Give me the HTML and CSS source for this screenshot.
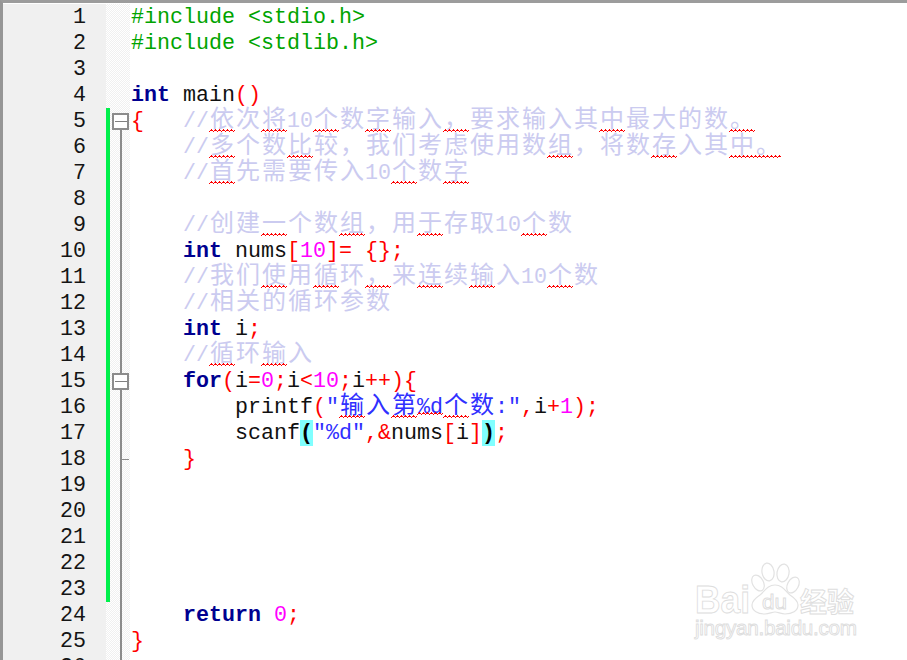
FILE: index.html
```html
<!DOCTYPE html>
<html lang="zh">
<head>
<meta charset="utf-8">
<title>Editor</title>
<link rel="stylesheet" href="styles.css">
</head>
<body>
<main class="editor">
<div class="row"><span class="num">1</span><span class="fold"></span><code class="code"><span class="pp">#include &lt;stdio.h&gt;</span></code></div>
<div class="row"><span class="num">2</span><span class="fold"></span><code class="code"><span class="pp">#include &lt;stdlib.h&gt;</span></code></div>
<div class="row"><span class="num">3</span><span class="fold"></span><code class="code"></code></div>
<div class="row"><span class="num">4</span><span class="fold"></span><code class="code"><b class="kw">int</b> main<span class="op">()</span></code></div>
<div class="row"><span class="num">5</span><span class="fold mod box first"></span><code class="code"><span class="op">{</span>   <span class="cm">//<span class="zh"><u>依</u>次<u>将</u></span>10<span class="zh"><u>个</u>数<u>字</u>输入<u>，</u>要求输入其<u>中</u>最大的数<u>。</u></span></span></code></div>
<div class="row"><span class="num">6</span><span class="fold mod line"></span><code class="code">    <span class="cm">//<span class="zh"><u>多</u>个数<u>比</u>较，我们考虑使用数<u>组</u>，将数<u>存</u>入其<u>中。</u></span></span></code></div>
<div class="row"><span class="num">7</span><span class="fold mod line"></span><code class="code">    <span class="cm">//<span class="zh"><u>首</u>先需要传入</span>10<span class="zh"><u>个</u>数<u>字</u></span></span></code></div>
<div class="row"><span class="num">8</span><span class="fold mod line"></span><code class="code"></code></div>
<div class="row"><span class="num">9</span><span class="fold mod line"></span><code class="code">    <span class="cm">//<span class="zh">创建<u>一</u>个数<u>组</u>，用<u>于</u>存取</span>10<span class="zh"><u>个</u>数</span></span></code></div>
<div class="row"><span class="num">10</span><span class="fold mod line"></span><code class="code">    <b class="kw">int</b> nums<span class="op">[</span><span class="nu">10</span><span class="op">]=</span> <span class="op">{};</span></code></div>
<div class="row"><span class="num">11</span><span class="fold mod line"></span><code class="code">    <span class="cm">//<span class="zh">我们<u>使</u>用<u>循</u>环<u>，</u>来<u>连</u>续<u>输</u>入</span>10<span class="zh"><u>个</u>数</span></span></code></div>
<div class="row"><span class="num">12</span><span class="fold mod line"></span><code class="code">    <span class="cm">//<span class="zh">相关的循环参数</span></span></code></div>
<div class="row"><span class="num">13</span><span class="fold mod line"></span><code class="code">    <b class="kw">int</b> i<span class="op">;</span></code></div>
<div class="row"><span class="num">14</span><span class="fold mod line"></span><code class="code">    <span class="cm">//<span class="zh"><u>循</u>环<u>输</u>入</span></span></code></div>
<div class="row"><span class="num">15</span><span class="fold mod box"></span><code class="code">    <b class="kw">for</b><span class="op">(</span>i<span class="op">=</span><span class="nu">0</span><span class="op">;</span>i<span class="op">&lt;</span><span class="nu">10</span><span class="op">;</span>i<span class="op">++){</span></code></div>
<div class="row"><span class="num">16</span><span class="fold mod line"></span><code class="code">        printf<span class="op">(</span><span class="st">"<span class="zh"><u>输</u>入<u>第</u></span><u class="mono">%d</u><span class="zh"><u>个</u>数</span>:"</span><span class="op">,</span>i<span class="op">+</span><span class="nu">1</span><span class="op">);</span></code></div>
<div class="row"><span class="num">17</span><span class="fold mod line"></span><code class="code">        scanf<b class="match">(</b><span class="st">"%d"</span><span class="op">,&amp;</span>nums<span class="op">[</span>i<span class="op">]</span><b class="match">)</b><span class="op">;</span></code></div>
<div class="row"><span class="num">18</span><span class="fold mod line end"></span><code class="code">    <span class="op">}</span></code></div>
<div class="row"><span class="num">19</span><span class="fold mod line"></span><code class="code"></code></div>
<div class="row"><span class="num">20</span><span class="fold mod line"></span><code class="code"></code></div>
<div class="row"><span class="num">21</span><span class="fold mod line"></span><code class="code"></code></div>
<div class="row"><span class="num">22</span><span class="fold mod line"></span><code class="code"></code></div>
<div class="row"><span class="num">23</span><span class="fold mod line"></span><code class="code"></code></div>
<div class="row"><span class="num">24</span><span class="fold line"></span><code class="code">    <b class="kw">return</b> <span class="nu">0</span><span class="op">;</span></code></div>
<div class="row"><span class="num">25</span><span class="fold line"></span><code class="code"><span class="op">}</span></code></div>
<div class="row"><span class="num">26</span><span class="fold line"></span><code class="code"></code></div>
<svg class="watermark" width="180" height="90" viewBox="0 0 180 90" aria-label="Baidu 经验">
  <ellipse class="wm-shape" cx="73" cy="17" rx="6" ry="9" transform="rotate(-10 73 17)"/>
  <ellipse class="wm-shape" cx="88" cy="18" rx="6" ry="9" transform="rotate(10 88 18)"/>
  <ellipse class="wm-shape" cx="63" cy="28" rx="5.5" ry="8.5" transform="rotate(-28 63 28)"/>
  <ellipse class="wm-shape" cx="98" cy="30" rx="5.5" ry="8.5" transform="rotate(28 98 30)"/>
  <path class="wm-shape" d="M80 30c-8 0-10 6-15 10-6 4-8 7-8 10 0 6 6 9 13 9 4 0 7-2 10-2s6 2 10 2c7 0 13-3 13-9 0-3-2-6-8-10-5-4-7-10-15-10z"/>
  <text class="wm-text wm-bai" x="0" y="58" textLength="55" lengthAdjust="spacingAndGlyphs">Bai</text>
  <text class="wm-text wm-du" x="67" y="54" textLength="25" lengthAdjust="spacingAndGlyphs">du</text>
  <text class="wm-text wm-zh" x="105" y="57">经验</text>
  <text class="wm-text wm-url" x="0" y="80" textLength="162">jingyan.baidu.com</text>
</svg>
</main>
</body>
</html>
```
FILE: styles.css
```css
html, body {
  margin: 0;
  padding: 0;
  background: #fff;
}

.editor {
  position: relative;
  width: 907px;
  height: 660px;
  box-sizing: border-box;
  overflow: hidden;
  padding-top: 1px;
  border-top: 3px solid #9c9c9c;
  border-left: 3px solid #969696;
  background: #fff;
  font-family: "Liberation Mono", "Noto Sans CJK SC", monospace;
  font-size: 21.67px;
  color: #101010;
}

.row {
  display: flex;
  height: 26px;
  line-height: 28px;
}

.num {
  flex: 0 0 103px;
  box-sizing: border-box;
  padding-right: 20px;
  text-align: right;
  background: #f0f0f0;
  color: #151515;
}

.fold {
  flex: 0 0 24px;
  position: relative;
  box-sizing: border-box;
  background: repeating-conic-gradient(#f0f0f0 0 25%, #fff 0 50%) 0 0 / 2px 2px;
}

.fold.mod::after {
  content: "";
  position: absolute;
  left: 0;
  top: 0;
  bottom: 0;
  width: 4px;
  background: #00f04c;
}

.fold.line::before,
.fold.box::before {
  content: "";
  position: absolute;
  left: 14px;
  top: 0;
  bottom: 0;
  width: 2px;
  background: #8c8c8c;
}

.fold.box.first::before {
  top: 21px;
}

.fold.box {
  background-image:
    linear-gradient(#808080, #808080),
    linear-gradient(#fff, #fff),
    linear-gradient(#8c8c8c, #8c8c8c),
    repeating-conic-gradient(#f0f0f0 0 25%, #fff 0 50%);
  background-size: 12px 1px, 13px 13px, 17px 17px, 2px 2px;
  background-position: 9px 13px, 8px 7px, 6px 5px, 0 0;
  background-repeat: no-repeat, no-repeat, no-repeat, repeat;
}

.fold.box::before {
  clip-path: polygon(0 0, 100% 0, 100% 5px, 0 5px, 0 22px, 100% 22px, 100% 100%, 0 100%);
}

.fold.end {
  background-image:
    linear-gradient(#8c8c8c, #8c8c8c),
    repeating-conic-gradient(#f0f0f0 0 25%, #fff 0 50%);
  background-size: 8px 1px, 2px 2px;
  background-position: 15px 13px, 0 0;
  background-repeat: no-repeat, repeat;
}

.code {
  flex: 1;
  padding-left: 1px;
  white-space: pre;
  font: inherit;
}

.pp { color: #00a400; }
.kw { color: #000090; font-weight: 700; }
.op { color: #ff0000; }
.nu { color: #ff00ff; }
.st { color: #3030ff; }
.cm { color: #cbcbf0; }

.zh {
  font-size: 24px;
  letter-spacing: 2px;
  line-height: 16px;
  margin-left: 1px;
  margin-right: -1px;
}

.match {
  display: inline-block;
  height: 26px;
  background: #80ffff;
  color: #000;
  font-weight: 700;
}

u {
  display: inline-block;
  position: relative;
  line-height: 16px;
  text-decoration: none;
}

u::after {
  content: "";
  position: absolute;
  left: -1px;
  right: 1px;
  top: 16px;
  height: 3px;
  background:
    linear-gradient(90deg, transparent 2px, #ff0000 2px, #ff0000 3px, transparent 3px) 0 0 / 4px 1px repeat-x,
    linear-gradient(90deg, transparent 1px, #ff0000 1px, #ff0000 3px, transparent 3px, transparent 3px, #ff0000 3px) 0 1px / 4px 1px repeat-x,
    linear-gradient(90deg, #ff0000 1px, transparent 1px) 0 2px / 4px 1px repeat-x;
}

u.mono::after {
  left: 0;
  right: 0;
  top: 12px;
}

.watermark {
  position: absolute;
  left: 692px;
  top: 552px;
  overflow: visible;
}

.wm-shape {
  fill: rgba(255, 255, 255, 0.6);
  stroke: #e2e2e2;
  stroke-width: 1.2;
}

.wm-text {
  fill: rgba(255, 255, 255, 0.6);
  stroke: #dddddd;
  stroke-width: 0.9;
}

.wm-bai {
  font-family: "Liberation Sans", sans-serif;
  font-weight: 700;
  font-size: 39px;
}

.wm-du {
  font-family: "Liberation Sans", sans-serif;
  font-size: 21px;
}

.wm-zh {
  font-family: "Noto Sans CJK SC", sans-serif;
  font-size: 27px;
  font-weight: 700;
}

.wm-url {
  font-family: "Liberation Sans", sans-serif;
  font-size: 20.7px;
}
```
